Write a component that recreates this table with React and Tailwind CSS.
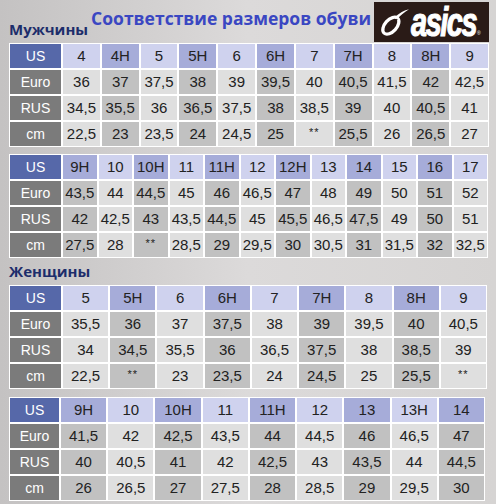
import React from "react";

const men1 = {
  head: ["4", "4H", "5", "5H", "6", "6H", "7", "7H", "8", "8H", "9"],
  euro: ["36", "37", "37,5", "38", "39", "39,5", "40", "40,5", "41,5", "42", "42,5"],
  rus: ["34,5", "35,5", "36", "36,5", "37,5", "38", "38,5", "39", "40", "40,5", "41"],
  cm: ["22,5", "23", "23,5", "24", "24,5", "25", "**", "25,5", "26", "26,5", "27"],
};

const men2 = {
  head: ["9H", "10", "10H", "11", "11H", "12", "12H", "13", "14", "15", "16", "17"],
  euro: ["43,5", "44", "44,5", "45", "46", "46,5", "47", "48", "49", "50", "51", "52"],
  rus: ["42", "42,5", "43", "43,5", "44,5", "45", "45,5", "46,5", "47,5", "49", "50", "51"],
  cm: ["27,5", "28", "**", "28,5", "29", "29,5", "30", "30,5", "31", "31,5", "32", "32,5"],
};

const women1 = {
  head: ["5", "5H", "6", "6H", "7", "7H", "8", "8H", "9"],
  euro: ["35,5", "36", "37", "37,5", "38", "39", "39,5", "40", "40,5"],
  rus: ["34", "34,5", "35,5", "36", "36,5", "37,5", "38", "38,5", "39"],
  cm: ["22,5", "**", "23", "23,5", "24", "24,5", "25", "25,5", "**"],
};

const women2 = {
  head: ["9H", "10", "10H", "11", "11H", "12", "13", "13H", "14"],
  euro: ["41,5", "42", "42,5", "43,5", "44", "44,5", "46", "46,5", "47"],
  rus: ["40", "40,5", "41", "42", "42,5", "43", "43,5", "44", "44,5"],
  cm: ["26", "26,5", "27", "27,5", "28", "28,5", "29", "29,5", "30"],
};

function Cell({ value, dark, head }) {
  let bg;
  if (head) bg = dark ? "bg-[#a6acd9]" : "bg-[#cfd2ee]";
  else bg = dark ? "bg-[#c1c1c1]" : "bg-[#dfdfdf]";
  const star = value === "**";
  return (
    <div
      className={`${bg} flex items-center justify-center h-[24px] text-[#222] ${
        star ? "text-[11px] tracking-[1px] pb-[4px]" : "text-[15px]"
      }`}
    >
      {value}
    </div>
  );
}

function Label({ children, us }) {
  return (
    <div
      className={`${
        us ? "bg-[#5668a9]" : "bg-[#7b7b7b]"
      } flex items-center justify-center h-[24px] text-white text-[14px]`}
    >
      {children}
    </div>
  );
}

function SizeTable({ data, startDark, width, usCol, cols }) {
  const rows = [
    ["Euro", data.euro],
    ["RUS", data.rus],
    ["cm", data.cm],
  ];
  return (
    <div
      className="ml-[9px] grid gap-[2px] bg-white p-px"
      style={{ width, gridTemplateColumns: `${usCol}px repeat(${cols}, 1fr)` }}
    >
      <Label us>US</Label>
      {data.head.map((v, i) => (
        <Cell key={"h" + i} value={v} head dark={startDark ? i % 2 === 0 : i % 2 === 1} />
      ))}
      {rows.map(([name, vals]) => (
        <React.Fragment key={name}>
          <Label>{name}</Label>
          {vals.map((v, i) => (
            <Cell key={name + i} value={v} dark={startDark ? i % 2 === 0 : i % 2 === 1} />
          ))}
        </React.Fragment>
      ))}
    </div>
  );
}

function AsicsLogo() {
  return (
    <div className="mt-[2px] mr-[7px] ml-auto flex h-[40px] w-[115px] shrink-0 items-center bg-[#2a1b17] pl-[5px]">
      {/* spiral mark */}
      <svg width="31" height="34" viewBox="0 0 34 34" className="shrink-0">
        <ellipse
          cx="13"
          cy="21"
          rx="6.5"
          ry="11"
          transform="rotate(42 13 21)"
          fill="none"
          stroke="white"
          strokeWidth="3.6"
        />
        <path d="M17 12 C 22 7, 28 4, 33 3 C 28 6, 23 10, 20 14 Z" fill="white" />
        <path d="M12 23 C 14 19, 17 16, 20 14" fill="none" stroke="#2a1b17" strokeWidth="1.6" />
      </svg>
      <span
        className="ml-[1px] inline-block origin-center scale-y-[1.38] text-[29px] leading-none font-bold italic tracking-[-1.5px] text-white [-webkit-text-stroke:0.8px_white]"
        style={{ fontFamily: '"Liberation Sans", Arial, sans-serif' }}
      >
        asics
      </span>
      <span className="mt-[22px] ml-[1px] text-[5px] leading-none text-white">®</span>
    </div>
  );
}

export default function App() {
  return (
    <div
      className="h-[504px] w-[496px] overflow-hidden bg-gradient-to-r from-[#c4c2c2] via-[#dcdada] to-[#d6d4d3]"
      style={{ fontFamily: '"Liberation Sans", Arial, sans-serif' }}
    >
      {/* header */}
      <div className="flex h-[43px] items-start">
        <div
          className="pt-[22px] pl-[9px] text-[15px] leading-none font-bold text-[#1d2d6b]"
          style={{ fontFamily: '"Open Sans", sans-serif' }}
        >
          Мужчины
        </div>
        <div
          className="pt-[10px] pl-[3px] text-[17.5px] leading-none font-bold text-[#3a47c2]"
          style={{ fontFamily: '"Open Sans", sans-serif' }}
        >
          Соответствие размеров обуви
        </div>
        <AsicsLogo />
      </div>

      <SizeTable data={men1} width={480} usCol={51} cols={11} startDark={false} />
      <div className="h-[7px]" />
      <SizeTable data={men2} width={479} usCol={51} cols={12} startDark={true} />

      <div
        className="flex h-[27px] items-center pl-[9px] text-[15px] font-bold text-[#1d2d6b]"
        style={{ fontFamily: '"Open Sans", sans-serif' }}
      >
        Женщины
      </div>

      <SizeTable data={women1} width={478} usCol={51} cols={9} startDark={false} />
      <div className="h-[8px]" />
      <SizeTable data={women2} width={476} usCol={49} cols={9} startDark={true} />
    </div>
  );
}
